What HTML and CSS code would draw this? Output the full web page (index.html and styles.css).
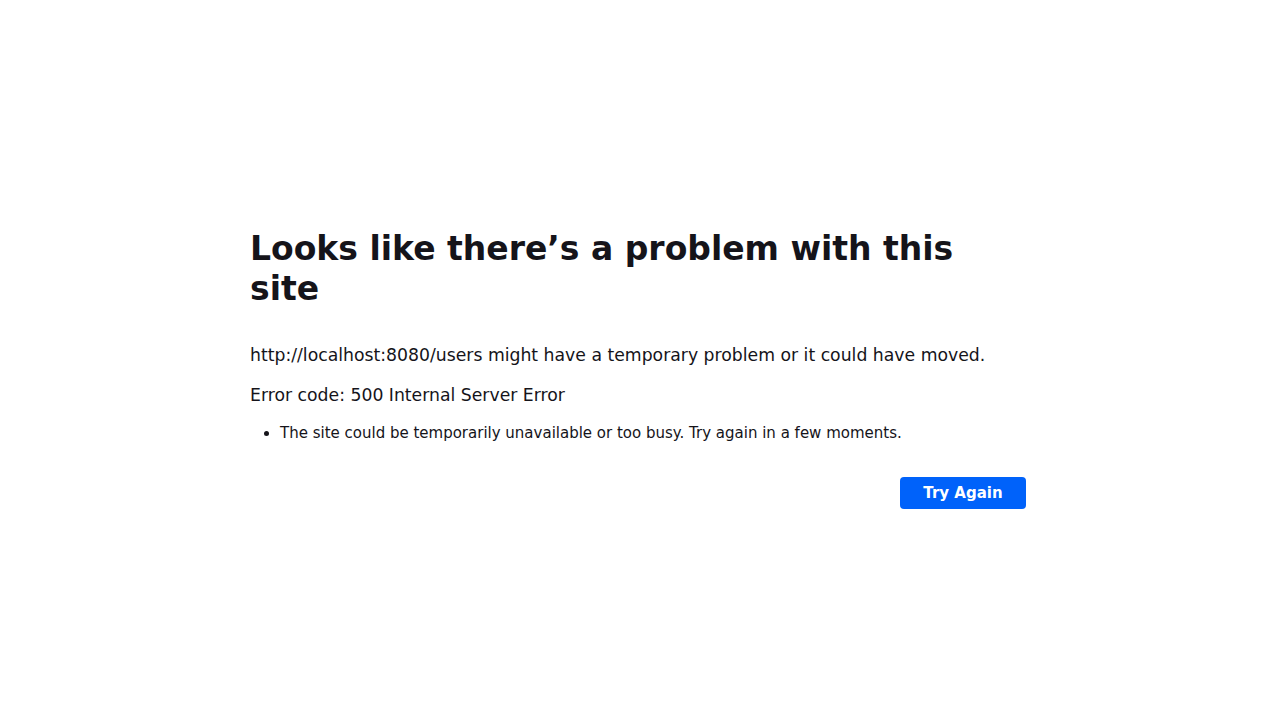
FILE: index.html
```html
<!DOCTYPE html>
<html lang="en">
<head>
<meta charset="utf-8">
<title>Problem loading page</title>
<link rel="stylesheet" href="styles.css">
</head>
<body>
<main class="page">
  <div class="container">
    <h1 class="title">Looks like there’s a problem with this site</h1>
    <p class="desc">http://localhost:8080/users might have a temporary problem or it could have moved.</p>
    <p class="desc code">Error code: 500 Internal Server Error</p>
    <ul class="list">
      <li>The site could be temporarily unavailable or too busy. Try again in a few moments.</li>
    </ul>
    <div class="actions">
      <button class="btn">Try Again</button>
    </div>
  </div>
</main>
</body>
</html>
```

FILE: styles.css
```css
html, body {
  margin: 0;
  padding: 0;
  background: #ffffff;
  color: #15141a;
  font-family: "DejaVu Sans", sans-serif;
}
.page {
  display: flex;
  justify-content: center;
  padding-top: 229px;
}
.container {
  width: 780px;
}
.title {
  margin: 0;
  font-size: 33px;
  line-height: 40px;
  font-weight: bold;
}
.desc {
  margin: 34px 0 0;
  font-size: 17.25px;
  line-height: 24px;
}
.code {
  margin-top: 16px;
}
.list {
  margin: 15px 0 0;
  padding-left: 30px;
  font-size: 15px;
  line-height: 22px;
}
.actions {
  display: flex;
  justify-content: flex-end;
  margin-top: 33px;
}
.btn {
  margin-right: 4px;
  width: 126px;
  height: 32px;
  border: none;
  border-radius: 4px;
  background: #0062fa;
  color: #ffffff;
  font-family: "DejaVu Sans", sans-serif;
  font-weight: bold;
  font-size: 15px;
  padding: 0;
}
```
